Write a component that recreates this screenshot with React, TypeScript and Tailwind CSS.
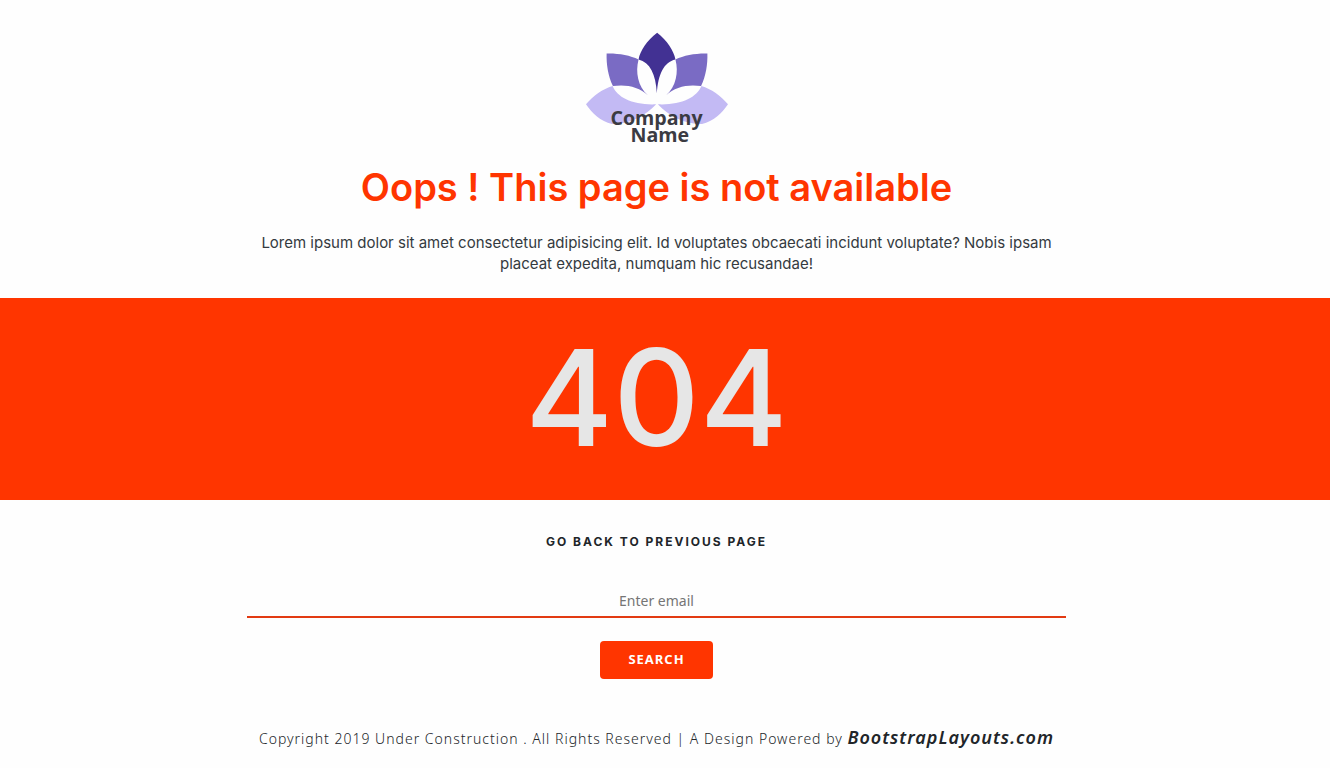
import React from 'react';

const Petals: React.FC = () => (
  <>
    <path fill="#7a6bc4" d="M92 88C126 87 162 93 188 106C178 145 186 186 216 214C190 188 150 180 111 186C96 155 91 120 92 88Z" />
    <path fill="#c3baf4" d="M30 241C52 215 80 195 110 186C124 221 172 244 241 241C206 277 160 302 108 300C74 293 48 267 30 241Z" />
  </>
);

const Logo: React.FC = () => (
  <svg viewBox="30 24 427 336" className="w-[142px] h-[112px] overflow-visible" role="img" aria-label="Company Name">
    <Petals />
    <g transform="translate(487 0) scale(-1 1)">
      <Petals />
    </g>
    <path fill="#423193" d="M244 26C213 49 193 80 188 106C222 114 240 150 243 208C247 150 264 114 299 106C294 80 274 49 244 26Z" />
    <g fill="#3b3b42" fontFamily="'Open Sans', sans-serif" fontWeight="700" fontSize="59" textAnchor="middle">
      <text x="242" y="303">Company</text>
      <text x="252" y="354">Name</text>
    </g>
  </svg>
);

export default function App() {
  return (
    <div className="min-h-screen bg-[#fefefe] text-[#212529] text-center font-['Inter',sans-serif]">
      <header className="pt-8 pr-[17px] pb-6">
        <div className="max-w-[819px] mx-auto flex flex-col items-center">
          <Logo />
          <h1 className="mt-5 text-[38px] leading-[46px] font-semibold text-[#ff3500]">
            Oops ! This page is not available
          </h1>
          <p className="mt-[22px] text-[15px] leading-[21px] text-[#343a40]">
            Lorem ipsum dolor sit amet consectetur adipisicing elit. Id voluptates obcaecati incidunt voluptate? Nobis ipsam
            placeat expedita, numquam hic recusandae!
          </p>
        </div>
      </header>

      <section className="bg-[#ff3500] pt-[18px] pb-[22px] pr-[17px]">
        <h2 className="text-[134px] leading-[162px] font-medium text-[#e6e6e6]">404</h2>
      </section>

      <main className="pt-8 pr-[17px]">
        <div className="max-w-[819px] mx-auto">
          <a href="#" className="block text-[12px] leading-5 font-bold uppercase tracking-[2px]">
            Go back to previous page
          </a>
          <form className="mt-8" onSubmit={(e) => e.preventDefault()}>
            <input
              type="email"
              aria-label="Enter email"
              placeholder="Enter email"
              className="block w-full h-[34px] border-b-2 border-[#e23a12] bg-transparent text-center text-[14px] font-['Noto_Sans',sans-serif] placeholder:text-[#757575] outline-none"
            />
            <button
              type="submit"
              className="mt-[23px] h-[38px] px-7 rounded bg-[#ff3500] text-white text-[13px] font-bold uppercase tracking-[1px] font-['Open_Sans',sans-serif]"
            >
              Search
            </button>
          </form>
        </div>
      </main>

      <footer className="pt-11 pr-[17px] pb-4 font-['Noto_Sans',sans-serif]">
        <p className="text-[14px] leading-7 font-light tracking-[1px]">
          Copyright 2019 Under Construction . All Rights Reserved | A Design Powered by{' '}
          <a href="#" className="text-[18px] font-semibold italic">BootstrapLayouts.com</a>
        </p>
      </footer>
    </div>
  );
}
